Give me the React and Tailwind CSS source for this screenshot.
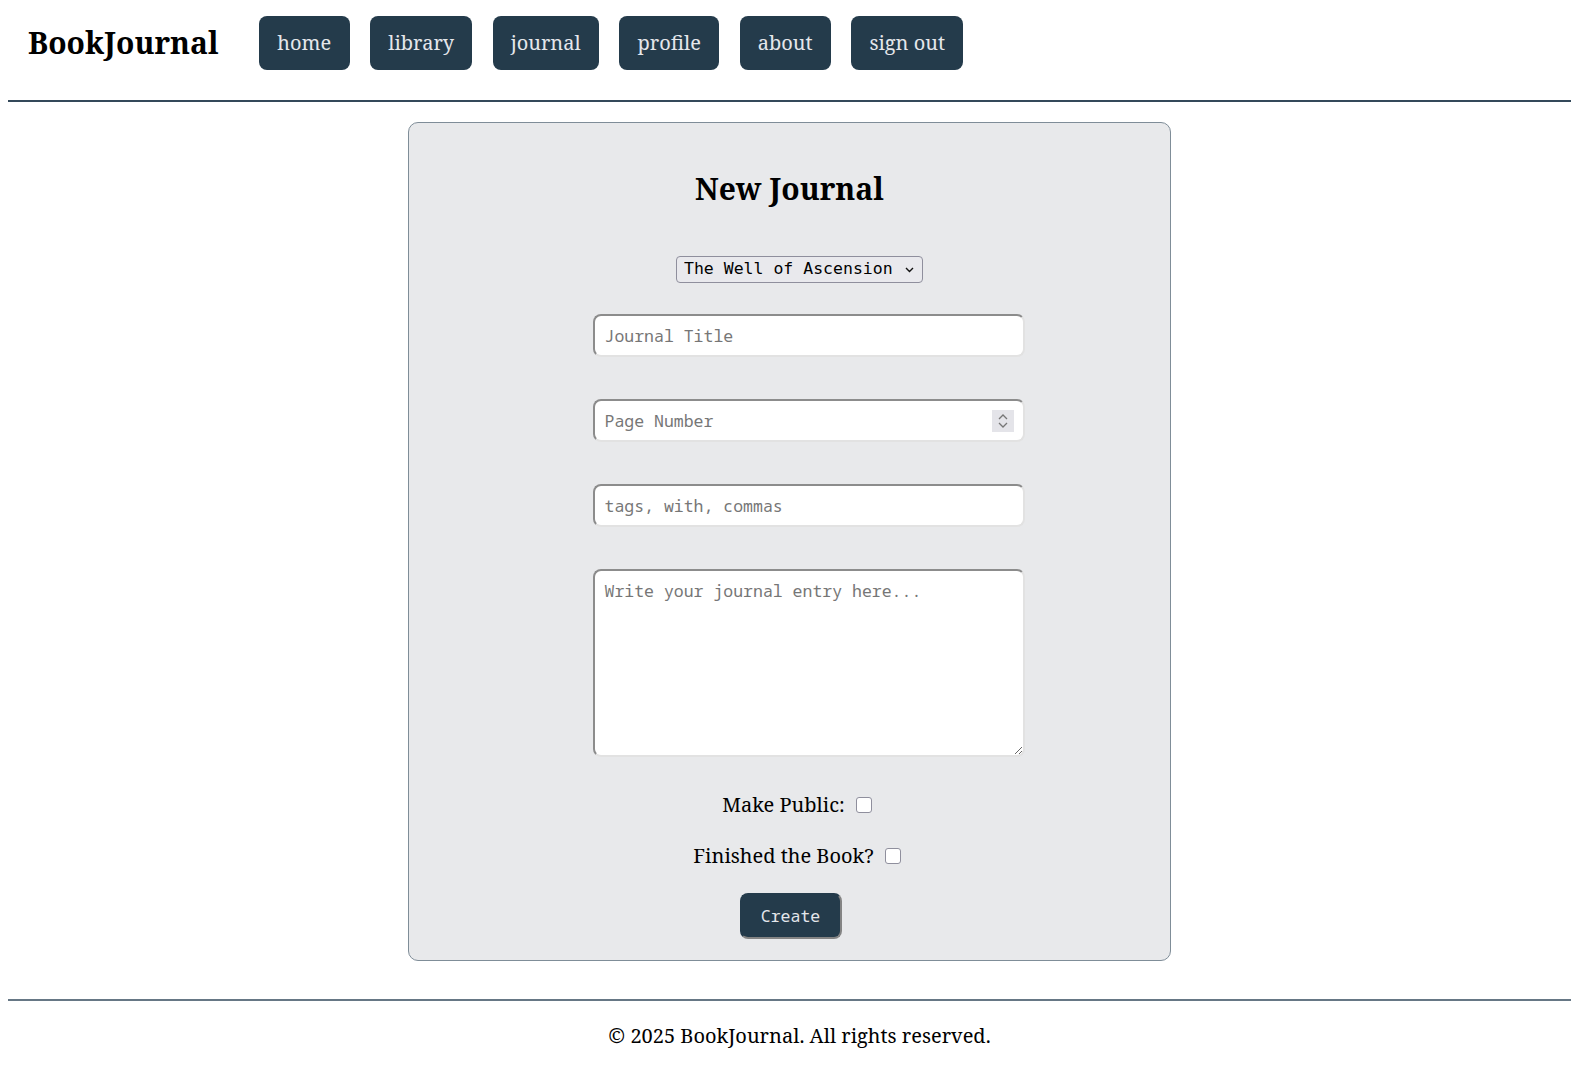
import React from "react";

const serif = { fontFamily: "'Noto Serif', 'DejaVu Serif', serif" };

const navItems = [
  { label: "home", w: "w-[91px]" },
  { label: "library", w: "w-[102px]" },
  { label: "journal", w: "w-[106px]" },
  { label: "profile", w: "w-[100px]" },
  { label: "about", w: "w-[91px]" },
  { label: "sign out", w: "w-[112px]" },
];

const fieldCls =
  "block w-[432px] h-[43px] bg-white rounded-lg border-2 border-t-[#8c8c8c] border-l-[#8c8c8c] border-r-[#e2e2e2] border-b-[#e2e2e2] pl-[10px] pr-[10px] text-[16.5px] text-black placeholder:text-[#767676] font-['Noto_Sans_Mono','DejaVu_Sans_Mono',monospace] outline-none";

const Header = () => (
  <header className="flex items-start pt-4 pb-[30px] pl-5 border-b-2 border-[#34495a]">
    <h1 className="text-[30px] leading-[54px] font-bold text-black mr-[40px]" style={serif}>
      BookJournal
    </h1>
    <nav className="flex gap-[20.5px]">
      {navItems.map((item) => (
        <button
          key={item.label}
          className={`${item.w} h-[54px] rounded-lg bg-[#243b4b] text-[#e5e7eb] text-[20px]`}
          style={serif}
        >
          {item.label}
        </button>
      ))}
    </nav>
  </header>
);

const NewJournalForm = () => (
  <div className="mx-auto mt-5 w-[763px] rounded-[10px] border border-[#7f8d98] bg-[#e8e9eb] pt-12 pb-[21px] flex flex-col items-center">
    <h2 className="text-[30px] leading-[36px] font-bold text-black" style={serif}>
      New Journal
    </h2>

    <div className="relative mt-[49px] ml-[20px]">
      <select className="appearance-none w-[247px] h-[27px] rounded border border-[#8f8f9d] bg-[#e9e9ed] pl-[7px] text-[16.5px] text-black font-['DejaVu_Sans_Mono',monospace]">
        <option>The Well of Ascension</option>
      </select>
      <svg
        className="pointer-events-none absolute right-[9px] top-[11px]"
        width="9"
        height="6"
        viewBox="0 0 9 6"
        fill="none"
        stroke="#111"
        strokeWidth="1.4"
      >
        <path d="M1 1l3.5 3.5L8 1" />
      </svg>
    </div>

    <input className={`${fieldCls} ml-[38px] mt-[31px]`} placeholder="Journal Title" />

    <div className="relative ml-[38px] mt-[42px]">
      <input
        type="number"
        className={`${fieldCls} [appearance:textfield] [&::-webkit-inner-spin-button]:appearance-none [&::-webkit-outer-spin-button]:appearance-none`}
        placeholder="Page Number"
      />
      <div className="pointer-events-none absolute right-[11px] top-[11px] w-[22px] h-[22px] bg-[#e4e4e9] flex items-center justify-center">
        <svg width="12" height="18" viewBox="0 0 12 18" fill="none" stroke="#767676" strokeWidth="1.3">
          <path d="M2 7l4-4 4 4" />
          <path d="M2 11l4 4 4-4" />
        </svg>
      </div>
    </div>

    <input className={`${fieldCls} ml-[38px] mt-[42px]`} placeholder="tags, with, commas" />
    <textarea
      className={`${fieldCls} ml-[38px] mt-[42px] h-[188px] pt-[8px]`}
      placeholder="Write your journal entry here..."
    />

    <label className="mt-9 ml-[15px] flex items-center gap-[11px] text-[20px] leading-6 text-black" style={serif}>
      Make Public:
      <input type="checkbox" className="appearance-none w-4 h-4 bg-white border border-[#8f8f9d] rounded-[3px]" />
    </label>
    <label className="mt-[27px] ml-[15px] flex items-center gap-[11px] text-[20px] leading-6 text-black" style={serif}>
      Finished the Book?
      <input type="checkbox" className="appearance-none w-4 h-4 bg-white border border-[#8f8f9d] rounded-[3px]" />
    </label>

    <button className="mt-[25px] ml-[2px] w-[102px] h-[46px] rounded-lg bg-[#243b4b] border-2 border-[#243b4b] border-r-[#848484] border-b-[#848484] text-[16.5px] text-[#e5e7eb] font-['Noto_Sans_Mono','DejaVu_Sans_Mono',monospace]">
      Create
    </button>
  </div>
);

const Footer = () => (
  <footer className="mt-[38px] border-t-2 border-[#667785] pt-[23px] pb-10 text-center">
    <p className="ml-[20px] text-[20px] leading-6 text-black" style={serif}>
      © 2025 BookJournal. All rights reserved.
    </p>
  </footer>
);

export default function App() {
  return (
    <div className="min-h-screen bg-white pl-2 pr-[21px]">
      <Header />
      <NewJournalForm />
      <Footer />
    </div>
  );
}
